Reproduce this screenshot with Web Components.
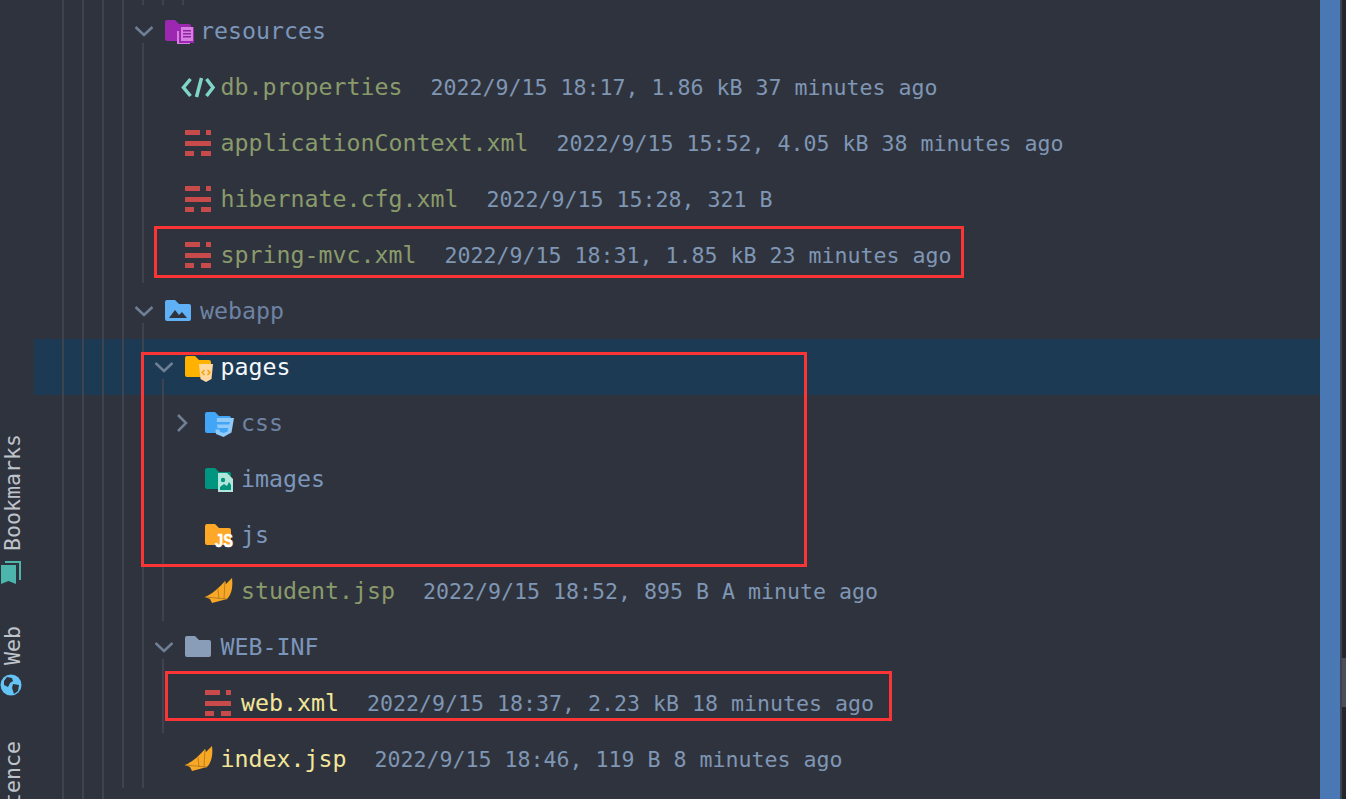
<!DOCTYPE html>
<html>
<head>
<meta charset="utf-8">
<style>
  html, body { margin: 0; height: 100%; background: #2f333d; overflow: hidden; }
  body { font-family: "DejaVu Sans Mono", monospace; }
</style>
</head>
<body>
<ide-window>
  <side-strip slot="strip">
    <strip-item icon="bookmarks">Bookmarks</strip-item>
    <strip-item icon="web">Web</strip-item>
    <strip-item style="margin-top: 3px">tence</strip-item>
  </side-strip>
  <project-tree slot="tree">
    <tree-guide x="62" top="0" bottom="799"></tree-guide>
    <tree-guide x="82" top="0" bottom="799"></tree-guide>
    <tree-guide x="102" top="0" bottom="799"></tree-guide>
    <tree-guide x="122" top="0" bottom="788"></tree-guide>
    <tree-guide x="142" top="43" bottom="283"></tree-guide>
    <tree-guide x="142" top="323" bottom="788"></tree-guide>
    <tree-guide x="142" top="0" bottom="5"></tree-guide>
    <tree-guide x="162" top="0" bottom="5"></tree-guide>
    <tree-guide x="182" top="0" bottom="5"></tree-guide>
    <tree-guide x="162" top="379" bottom="621"></tree-guide>
    <tree-guide x="162" top="659" bottom="733"></tree-guide>

    <tree-row indent="0" chevron="down" icon="resources" tone="dir">resources</tree-row>
    <tree-row indent="1" icon="properties" tone="added">db.properties<span slot="meta">2022/9/15 18:17, 1.86 kB 37 minutes ago</span></tree-row>
    <tree-row indent="1" icon="xml" tone="added">applicationContext.xml<span slot="meta">2022/9/15 15:52, 4.05 kB 38 minutes ago</span></tree-row>
    <tree-row indent="1" icon="xml" tone="added">hibernate.cfg.xml<span slot="meta">2022/9/15 15:28, 321 B</span></tree-row>
    <tree-row indent="1" icon="xml" tone="added">spring-mvc.xml<span slot="meta">2022/9/15 18:31, 1.85 kB 23 minutes ago</span></tree-row>
    <tree-row indent="0" chevron="down" icon="webapp" tone="dim">webapp</tree-row>
    <tree-row indent="1" chevron="down" icon="pages" tone="white" selected>pages</tree-row>
    <tree-row indent="2" chevron="right" icon="css" tone="dim">css</tree-row>
    <tree-row indent="2" icon="images" tone="dir">images</tree-row>
    <tree-row indent="2" icon="js" tone="dir">js</tree-row>
    <tree-row indent="2" icon="jsp" tone="added">student.jsp<span slot="meta">2022/9/15 18:52, 895 B A minute ago</span></tree-row>
    <tree-row indent="1" chevron="down" icon="webinf" tone="dir">WEB-INF</tree-row>
    <tree-row indent="2" icon="xml" tone="changed">web.xml<span slot="meta">2022/9/15 18:37, 2.23 kB 18 minutes ago</span></tree-row>
    <tree-row indent="1" icon="jsp" tone="changed">index.jsp<span slot="meta">2022/9/15 18:46, 119 B 8 minutes ago</span></tree-row>

    <mark-box x="154" y="226" w="810" h="52"></mark-box>
    <mark-box x="141" y="352" w="666" h="215"></mark-box>
    <mark-box x="165" y="671" w="727" h="50"></mark-box>
  </project-tree>
  <scroll-rail slot="rail"></scroll-rail>
</ide-window>

<script>
const folder = (fill) =>
  `<path fill="${fill}" d="M1 9a2 2 0 0 1 2-2h8l4 4h10a2 2 0 0 1 2 2v13a2 2 0 0 1-2 2H3a2 2 0 0 1-2-2z"/>`;

const ICONS = {
  resources: folder('#9c27b0') +
    `<path fill="#d77fe0" d="M13 18h2v11h11v2H13z"/>
     <path fill="#9c27b0" d="M15 14h15v16H15z"/>
     <path fill="#d77fe0" d="M17 14h12v14H17z"/>
     <path fill="#8e24a4" d="M19 17h8v1.600h-8zM19 20h8v1.600h-8zM19 23h8v1.600h-8z"/>`,
  properties: `<path fill="none" stroke="#7fd6c8" stroke-width="3.500" d="M6.500 10l-7 8.500 7 8.500M17.500 9l-5 19M22.500 10l6.500 8.500-6.500 8.500"/>`,
  xml: `<path fill="#c94a4a" d="M1 5h15v5H1zM22 5h5v5h-5zM1 16h26v5H1zM1 26h9v5H1zM17 26h10v5H17z"/>`,
  webapp: folder('#5fb0f5') +
    `<path fill="#2f333d" d="M5 25l6-8 4 5 3-3 5 6z"/>`,
  pages: folder('#ffb300') +
    `<path fill="#ffd9a0" d="M15 15h14l-1.500 15-5.500 3-5.500-3z"/>
     <path fill="none" stroke="#f59c00" stroke-width="1.300" d="M20.500 21l-2.500 2.500 2.500 2.500M23.500 21l2.500 2.500-2.500 2.500"/>`,
  css: folder('#42a5f5') +
    `<path fill="#90caf9" d="M13 13h17l-2.500 14.500-8 4.500-7.500-3-.6-4.500h4l.3 2 3.800 1.500 4-1.500.6-3.500H13.500l-.4-3.500h12.300l.4-2.500H12.700z"/>`,
  images: folder('#00957f') +
    `<path fill="#b2e6da" d="M14 12h9l6 6v13H14z"/>
     <circle cx="19" cy="19" r="2.200" fill="#00957f"/>
     <path fill="#00957f" d="M16 29v-3l4-3 3 2 2-4 2 3v5z"/>`,
  js: folder('#ffa726') +
    `<text x="11" y="30" textLength="18" lengthAdjust="spacingAndGlyphs" font-family="Liberation Sans, sans-serif" font-weight="700" font-size="18" fill="#fff" stroke="#fff" stroke-width=".4">JS</text>`,
  jsp: `<path fill="#f9a825" d="M1 24C8 21 15 15 21 8l1 3c2-2 4-4 6-6 1 8 0 16-5 21L8 30l-2-4z"/>
     <path fill="none" stroke="#a8761f" stroke-width=".8" d="M1 24l22 2M21 8l-1 18M14 16l1 10"/>`,
  webinf: folder('#8a9db8'),
};

const CHEVRONS = {
  down: `<path fill="none" stroke="#6f7f95" stroke-width="2.500" d="M7.500 14l8.500 8 8.500-8"/>`,
  right: `<path fill="none" stroke="#6f7f95" stroke-width="2.500" d="M9 10l8 8-8 8"/>`,
};

class IdeWindow extends HTMLElement {
  constructor() {
    super();
    this.attachShadow({ mode: 'open' });
  }

  connectedCallback() {
    this.shadowRoot.innerHTML = `
      <style>
        :host {
          display: flex;
          width: 1346px;
          height: 799px;
          overflow: hidden;
          background: #2f333d;
        }
        ::slotted([slot=strip]) { flex: 0 0 34px; }
        ::slotted([slot=tree]) { flex: 1 1 auto; }
        ::slotted([slot=rail]) { flex: 0 0 26px; }
      </style>
      <slot name="strip"></slot>
      <slot name="tree"></slot>
      <slot name="rail"></slot>
    `;
  }
}

class SideStrip extends HTMLElement {
  constructor() {
    super();
    this.attachShadow({ mode: 'open' });
  }

  connectedCallback() {
    this.shadowRoot.innerHTML = `
      <style>
        :host {
          display: flex;
          flex-direction: column;
          gap: 42px;
          padding-top: 434px;
          height: 799px;
          box-sizing: border-box;
          overflow: hidden;
          color: #bfc3cb;
        }
      </style>
      <slot></slot>
    `;
  }
}

class StripItem extends HTMLElement {
  constructor() {
    super();
    this.attachShadow({ mode: 'open' });
  }

  connectedCallback() {
    const glyphs = {
      bookmarks: `<svg width="22" height="24" viewBox="0 0 22 24">
          <path fill="#4db6ac" d="M1 5h15v19l-7.500-3L1 24z"/>
          <path fill="none" stroke="#4db6ac" stroke-width="2" d="M5 2h15v18"/>
        </svg>`,
      web: `<svg width="22" height="22" viewBox="0 0 22 22">
          <circle cx="11" cy="11" r="10.500" fill="#64c4f5"/>
          <path fill="#2f333d" d="M7 3l5 1 1 3-3 2-2 4-4-2 0-4zM13 10l6 1-1 6-4 3-2-6z"/>
        </svg>`,
    };
    const icon = glyphs[this.getAttribute('icon')] || '';
    this.shadowRoot.innerHTML = `
      <style>
        :host {
          display: flex;
          flex-direction: column;
          gap: 9px;
          align-items: flex-start;
          font: 21.600px/26px "DejaVu Sans Mono", monospace;
        }
        .label {
          writing-mode: vertical-rl;
          transform: rotate(180deg);
          white-space: nowrap;
        }
        svg { display: block; }
      </style>
      <div class="label"><slot></slot></div>
      ${icon}
    `;
  }
}

class TreeRow extends HTMLElement {
  constructor() {
    super();
    this.attachShadow({ mode: 'open' });
  }

  connectedCallback() {
    const indent = Number(this.getAttribute('indent') || 0);
    const chevron = CHEVRONS[this.getAttribute('chevron')] || '';
    const icon = ICONS[this.getAttribute('icon')] || '';
    const tones = {
      dir: '#7c96bb',
      dim: '#6e83a3',
      added: '#8a9b6b',
      changed: '#f2e69a',
      white: '#f5f7fa',
    };
    this.shadowRoot.innerHTML = `
      <style>
        :host {
          display: flex;
          align-items: center;
          height: 56px;
          padding-left: ${93.5 + indent * 20.5}px;
          box-sizing: border-box;
          white-space: nowrap;
        }
        :host([selected]) { background: #1d3a55; }
        svg { flex: 0 0 36px; width: 36px; height: 36px; overflow: visible; }
        .glyph { margin-left: ${0.5 - indent * 0.5}px; margin-right: ${indent * 0.5 - 0.5}px; }
        .name {
          margin-left: .5px;
          font: 23.250px/56px "DejaVu Sans Mono", monospace;
          color: ${tones[this.getAttribute('tone')] || tones.dir};
        }
        .meta {
          margin-left: 28px;
          align-self: flex-start;
          font: 21.600px/58px "DejaVu Sans Mono", monospace;
          color: #7f96b4;
        }
      </style>
      <svg viewBox="0 0 36 36">${chevron}</svg>
      <svg class="glyph" viewBox="0 0 36 36">${icon}</svg>
      <span class="name"><slot></slot></span>
      <span class="meta"><slot name="meta"></slot></span>
    `;
  }
}

class ProjectTree extends HTMLElement {
  constructor() {
    super();
    this.attachShadow({ mode: 'open' });
  }

  connectedCallback() {
    this.shadowRoot.innerHTML = `
      <style>
        :host {
          display: block;
          position: relative;
          height: 799px;
          padding-top: 3px;
          box-sizing: border-box;
          overflow: hidden;
        }
      </style>
      <slot></slot>
    `;
  }
}

// x and y below are page coordinates, the tree starts 34px in
class TreeGuide extends HTMLElement {
  constructor() {
    super();
    this.attachShadow({ mode: 'open' });
  }

  connectedCallback() {
    const top = Number(this.getAttribute('top'));
    const bottom = Number(this.getAttribute('bottom'));
    this.shadowRoot.innerHTML = `
      <style>
        :host {
          position: absolute;
          left: ${this.getAttribute('x') - 34}px;
          top: ${top}px;
          width: 2px;
          height: ${bottom - top}px;
          background: #3e4350;
          z-index: 1;
        }
      </style>
    `;
  }
}

class MarkBox extends HTMLElement {
  constructor() {
    super();
    this.attachShadow({ mode: 'open' });
  }

  connectedCallback() {
    this.shadowRoot.innerHTML = `
      <style>
        :host {
          position: absolute;
          left: ${this.getAttribute('x') - 34}px;
          top: ${this.getAttribute('y')}px;
          width: ${this.getAttribute('w')}px;
          height: ${this.getAttribute('h')}px;
          box-sizing: border-box;
          border: 3px solid #fb3535;
          z-index: 2;
        }
      </style>
    `;
  }
}

class ScrollRail extends HTMLElement {
  constructor() {
    super();
    this.attachShadow({ mode: 'open' });
  }

  connectedCallback() {
    this.shadowRoot.innerHTML = `
      <style>
        :host { display: flex; height: 799px; }
        .marker { flex: 0 0 20px; background: #4a78b5; }
        .edge { flex: 0 0 2px; background: #3d4350; }
        .track { flex: 1; background: #23262d; padding-top: 658px; box-sizing: border-box; }
        .thumb { height: 49px; background: #4a4e59; }
      </style>
      <div class="marker"></div>
      <div class="edge"></div>
      <div class="track"><div class="thumb"></div></div>
    `;
  }
}

customElements.define('ide-window', IdeWindow);
customElements.define('side-strip', SideStrip);
customElements.define('strip-item', StripItem);
customElements.define('tree-row', TreeRow);
customElements.define('project-tree', ProjectTree);
customElements.define('tree-guide', TreeGuide);
customElements.define('mark-box', MarkBox);
customElements.define('scroll-rail', ScrollRail);
</script>
</body>
</html>
